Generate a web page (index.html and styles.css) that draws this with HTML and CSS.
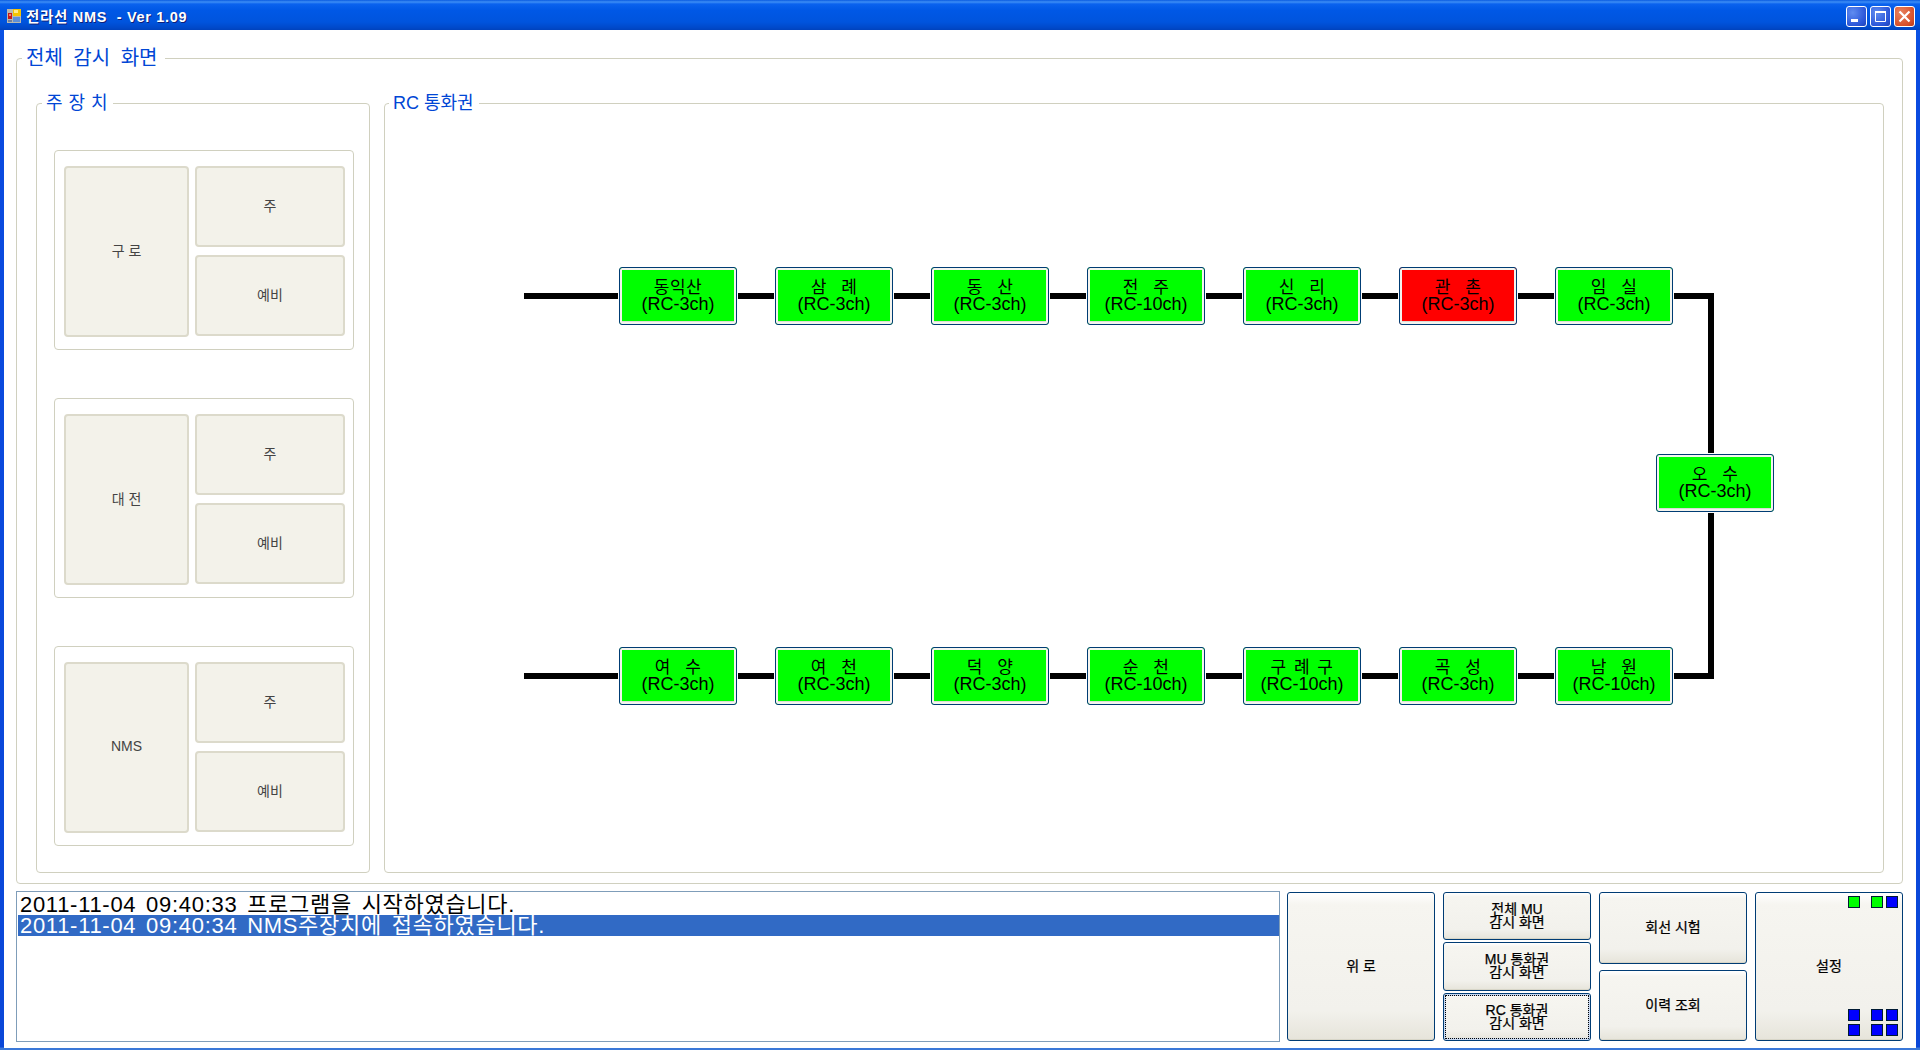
FILE: index.html
```html
<!DOCTYPE html>
<html lang="ko">
<head>
    <meta charset="UTF-8">
    <meta name="viewport" content="width=device-width, initial-scale=1.0">
    <title>전라선 NMS - Ver 1.09</title>
    <link rel="stylesheet" href="styles.css">
</head>
<body>
    <div class="window">
        <div class="titlebar">
            <svg class="app-icon" width="14" height="14" viewBox="0 0 14 14">
                <rect x="0" y="0" width="14" height="14" fill="#b8b8b0"/>
                <rect x="6" y="0" width="8" height="7" fill="#f5c400"/>
                <rect x="7" y="1" width="4" height="3" fill="#ffe98a"/>
                <rect x="1" y="4" width="4" height="6" fill="#c81818"/>
                <rect x="2" y="5" width="2" height="2" fill="#f08070"/>
                <rect x="6" y="8" width="7" height="5" fill="#5f8fd8"/>
                <rect x="1" y="11" width="4" height="2" fill="#6f7f9f"/>
            </svg>
            <span class="title-text">전라선 NMS &nbsp;- Ver 1.09</span>
            <div class="win-buttons">
                <div class="win-btn">
                    <svg width="19" height="19" viewBox="0 0 19 19"><rect x="4" y="12" width="7" height="3" fill="#fff"/></svg>
                </div>
                <div class="win-btn">
                    <svg width="19" height="19" viewBox="0 0 19 19"><path d="M4.5 4.5h10v10h-10z M4 5.5h11" fill="none" stroke="#fff" stroke-width="1"/><rect x="4" y="4" width="11" height="2" fill="#fff"/></svg>
                </div>
                <div class="win-btn win-close">
                    <svg width="19" height="19" viewBox="0 0 19 19"><path d="M4.5 4.5l10 10M14.5 4.5l-10 10" stroke="#fff" stroke-width="2.2"/></svg>
                </div>
            </div>
        </div>

        <div class="client">
            <fieldset class="group main-group">
                <legend class="legend-big">전체 감시 화면</legend>

                <fieldset class="group device-panel">
                    <legend>주 장 치</legend>

                    <div class="device-box">
                        <div class="tile tile-name">구 로</div>
                        <div class="tile">주</div>
                        <div class="tile">예비</div>
                    </div>
                    <div class="device-box">
                        <div class="tile tile-name">대 전</div>
                        <div class="tile">주</div>
                        <div class="tile">예비</div>
                    </div>
                    <div class="device-box">
                        <div class="tile tile-name">NMS</div>
                        <div class="tile">주</div>
                        <div class="tile">예비</div>
                    </div>
                </fieldset>

                <fieldset class="group rc-panel">
                    <legend>RC 통화권</legend>

                    <div class="diagram">
                        <svg class="lines" width="1498" height="757">
                            <path d="M139 181H1326V561H139" fill="none" stroke="#000" stroke-width="6"/>
                        </svg>

                        <div class="node row-top col-1"><span class="node-name">동익산</span><span>(RC-3ch)</span></div>
                        <div class="node row-top col-2"><span class="node-name">삼&nbsp;&nbsp;례</span><span>(RC-3ch)</span></div>
                        <div class="node row-top col-3"><span class="node-name">동&nbsp;&nbsp;산</span><span>(RC-3ch)</span></div>
                        <div class="node row-top col-4"><span class="node-name">전&nbsp;&nbsp;주</span><span>(RC-10ch)</span></div>
                        <div class="node row-top col-5"><span class="node-name">신&nbsp;&nbsp;리</span><span>(RC-3ch)</span></div>
                        <div class="node row-top col-6 alarm"><span class="node-name">관&nbsp;&nbsp;촌</span><span>(RC-3ch)</span></div>
                        <div class="node row-top col-7"><span class="node-name">임&nbsp;&nbsp;실</span><span>(RC-3ch)</span></div>

                        <div class="node node-turn"><span class="node-name">오&nbsp;&nbsp;수</span><span>(RC-3ch)</span></div>

                        <div class="node row-bottom col-1"><span class="node-name">여&nbsp;&nbsp;수</span><span>(RC-3ch)</span></div>
                        <div class="node row-bottom col-2"><span class="node-name">여&nbsp;&nbsp;천</span><span>(RC-3ch)</span></div>
                        <div class="node row-bottom col-3"><span class="node-name">덕&nbsp;&nbsp;양</span><span>(RC-3ch)</span></div>
                        <div class="node row-bottom col-4"><span class="node-name">순&nbsp;&nbsp;천</span><span>(RC-10ch)</span></div>
                        <div class="node row-bottom col-5"><span class="node-name">구 례 구</span><span>(RC-10ch)</span></div>
                        <div class="node row-bottom col-6"><span class="node-name">곡&nbsp;&nbsp;성</span><span>(RC-3ch)</span></div>
                        <div class="node row-bottom col-7"><span class="node-name">남&nbsp;&nbsp;원</span><span>(RC-10ch)</span></div>
                    </div>
                </fieldset>
            </fieldset>

            <div class="bottom">
                <ul class="log">
                    <li>2011-11-04 09:40:33 프로그램을 시작하였습니다.</li>
                    <li class="selected">2011-11-04 09:40:34 NMS주장치에 접속하였습니다.</li>
                </ul>

                <div class="actions">
                    <button class="btn">위 로</button>
                    <div class="btn-stack stack-three">
                        <button class="btn">전체 MU<br>감시 화면</button>
                        <button class="btn">MU 통화권<br>감시 화면</button>
                        <button class="btn focused">RC 통화권<br>감시 화면</button>
                    </div>
                    <div class="btn-stack stack-two">
                        <button class="btn">회선 시험</button>
                        <button class="btn">이력 조회</button>
                    </div>
                    <button class="btn btn-settings">
                        설정
                        <i class="led green led-a"></i>
                        <i class="led green led-b"></i>
                        <i class="led blue led-c"></i>
                        <i class="led blue led-d"></i>
                        <i class="led blue led-e"></i>
                        <i class="led blue led-f"></i>
                        <i class="led blue led-g"></i>
                        <i class="led blue led-h"></i>
                        <i class="led blue led-i"></i>
                    </button>
                </div>
            </div>
        </div>
    </div>
</body>
</html>
```

FILE: styles.css
```css
* {
    box-sizing: border-box;
}
html, body {
    margin: 0;
    padding: 0;
    height: 100%;
    overflow: hidden;
}
body {
    font-family: "Liberation Sans", "Noto Sans CJK KR", sans-serif;
    color: #000;
    background-color: #0a4be0;
}
.window {
    height: 1050px;
    display: flex;
    flex-direction: column;
    background: linear-gradient(to bottom, #0a5ae8 0, #0a4be0 60px, #0a47d8 1047px, #3a78d8 1048px);
}

/* title bar */
.titlebar {
    height: 30px;
    flex: none;
    display: flex;
    align-items: center;
    padding: 0 5px 0 7px;
    background: linear-gradient(to bottom, #0a5be0 0, #3d8ef5 2px, #0a62ee 4px, #0058e6 10px, #0054dd 22px, #0048c8 28px, #0042bc 30px);
}
.app-icon {
    flex: none;
    margin: 2px 5px 0 0;
}
.title-text {
    font-size: 14.5px;
    font-weight: bold;
    letter-spacing: 0.7px;
    color: #fff;
    text-shadow: 1px 1px 0 #0f1e78;
    white-space: pre;
}
.win-buttons {
    margin: 2px 0 0 auto;
    display: flex;
    gap: 3px;
}
.win-btn {
    width: 21px;
    height: 21px;
    border: 1px solid #fff;
    border-radius: 3px;
    background: radial-gradient(circle at 30% 30%, #5f8cf0, #2a55d8 70%, #1f43b8);
}
.win-btn svg {
    display: block;
}
.win-close {
    background: radial-gradient(circle at 30% 30%, #e8825f, #d8502a 70%, #b83a18);
}

/* client area */
.client {
    flex: 1;
    display: flex;
    flex-direction: column;
    margin: 0 4px 2px;
    padding: 16px 13px 6px 12px;
    background-color: #fff;
}
.group {
    margin: 0;
    border: 1px solid #d0d0bf;
    border-radius: 4px;
    min-width: 0;
}
.group legend {
    height: 24px;
    line-height: 24px;
    font-size: 18px;
    color: #0046d5;
    padding: 0 5px 0 4px;
    margin-left: 4px;
}
.group .legend-big {
    font-size: 20px;
    word-spacing: 5px;
    padding: 0 7px 0 4px;
    margin-left: -14px;
}
.main-group {
    height: 838px;
    padding: 21px 18px 10px 19px;
    display: flex;
    gap: 14px;
}
.device-panel {
    width: 334px;
    flex: none;
    padding: 35px 15px 26px 17px;
    display: flex;
    flex-direction: column;
    gap: 48px;
}
.device-panel legend {
    word-spacing: 1px;
    margin-left: -12px;
}
.device-box {
    width: 300px;
    height: 200px;
    flex: none;
    border: 1px solid #d0d0bf;
    border-radius: 4px;
    padding: 15px 7px 0 9px;
    display: grid;
    grid-template-columns: 125px 150px;
    grid-template-rows: 81px 82px;
    column-gap: 6px;
    row-gap: 8px;
}
.tile {
    height: 81px;
    display: flex;
    align-items: center;
    justify-content: center;
    padding-bottom: 3px;
    background-color: #f3f2ea;
    border: 2px solid #dcdacb;
    border-radius: 4px;
    font-size: 14px;
    color: #444;
}
.tile-name {
    grid-row: 1 / 3;
    height: 171px;
}
.rc-panel {
    flex: 1;
    padding: 0;
    display: flex;
}

/* diagram canvas */
.diagram {
    position: relative;
    flex: 1;
}
.lines {
    position: absolute;
    left: 0;
    top: 0;
}
.node {
    position: absolute;
    width: 118px;
    height: 58px;
    display: flex;
    flex-direction: column;
    align-items: center;
    justify-content: center;
    background-color: #00ff00;
    border: 1px solid #003c74;
    border-radius: 3px;
    box-shadow: 0 0 0 1px #fff, inset 0 0 0 2px #f4f4ee, inset 0 -3px 0 #dcdcd4;
    font-size: 18px;
    line-height: 16px;
}
.node-name {
    font-size: 17px;
    letter-spacing: 0.5px;
    word-spacing: 2px;
}
.node.alarm {
    background-color: #ff0000;
}
.row-top { top: 152px; }
.row-bottom { top: 532px; }
.col-1 { left: 234px; }
.col-2 { left: 390px; }
.col-3 { left: 546px; }
.col-4 { left: 702px; }
.col-5 { left: 858px; }
.col-6 { left: 1014px; }
.col-7 { left: 1170px; }
.node-turn {
    left: 1271px;
    top: 339px;
}

/* bottom row */
.bottom {
    flex: 1;
    margin-top: 7px;
    display: flex;
    gap: 7px;
    min-height: 0;
}
.log {
    flex: 1;
    margin: 0;
    padding: 2px 0 0 1px;
    list-style: none;
    border: 1px solid #7f9db9;
    font-size: 22px;
    letter-spacing: 0.7px;
    word-spacing: 3px;
}
.log li {
    height: 21px;
    line-height: 21px;
    padding-left: 2px;
    white-space: nowrap;
}
.log .selected {
    background-color: #316ac5;
    color: #fff;
}
.actions {
    flex: none;
    display: grid;
    grid-template-columns: repeat(4, 148px);
    column-gap: 8px;
    margin: 1px 0;
}
.btn {
    position: relative;
    flex: 1;
    margin: 0;
    padding: 0;
    font-family: inherit;
    font-size: 14px;
    line-height: 13px;
    -webkit-text-stroke: 0.25px #000;
    color: #000;
    background: linear-gradient(to bottom, #fff 0, #f6f5f0 8%, #f2f1ec 80%, #e6e4da 100%);
    border: 1px solid #003c74;
    border-radius: 3px;
    box-shadow: inset 0 -1px 0 #d8d6c8;
}
.btn-stack {
    display: flex;
    flex-direction: column;
}
.stack-three {
    gap: 2px;
}
.stack-two {
    gap: 6px;
}
.focused {
    outline: 1px dotted #000;
    outline-offset: -3px;
    box-shadow: inset 0 0 0 2px #c8d8f0;
}
.led {
    position: absolute;
    width: 12px;
    height: 12px;
    border: 1px solid #001a33;
}
.green { background-color: #00ff00; }
.blue { background-color: #0000ff; }
.led-a { left: 92px; top: 3px; }
.led-b { left: 115px; top: 3px; }
.led-c { left: 130px; top: 3px; }
.led-d { left: 92px; top: 116px; }
.led-e { left: 115px; top: 116px; }
.led-f { left: 130px; top: 116px; }
.led-g { left: 92px; top: 131px; }
.led-h { left: 115px; top: 131px; }
.led-i { left: 130px; top: 131px; }
```
